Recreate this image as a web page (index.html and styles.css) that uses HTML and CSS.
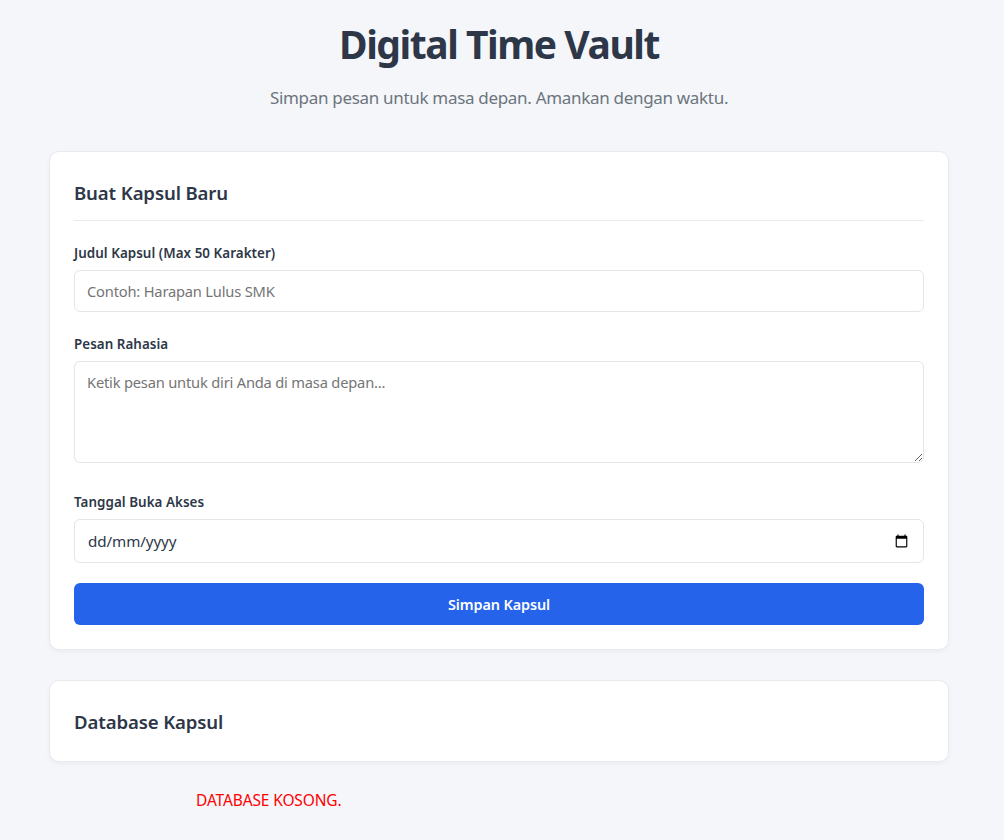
FILE: index.html
```html
<!DOCTYPE html>
<html lang="id">
<head>
<meta charset="utf-8">
<title>Digital Time Vault</title>
<link rel="stylesheet" href="styles.css">
</head>
<body>
<main class="container">
  <header class="header">
    <h1 class="title">Digital Time Vault</h1>
    <p class="subtitle">Simpan pesan untuk masa depan. Amankan dengan waktu.</p>
  </header>
  <section class="card card-form">
    <h2 class="card-title with-rule">Buat Kapsul Baru</h2>
    <form class="form">
      <div class="field field-title">
        <label class="label" for="judul">Judul Kapsul (Max 50 Karakter)</label>
        <input class="control control-text" id="judul" type="text" maxlength="50" placeholder="Contoh: Harapan Lulus SMK">
      </div>
      <div class="field field-message">
        <label class="label" for="pesan">Pesan Rahasia</label>
        <textarea class="control control-area" id="pesan" placeholder="Ketik pesan untuk diri Anda di masa depan..."></textarea>
      </div>
      <div class="field field-date">
        <label class="label" for="tanggal">Tanggal Buka Akses</label>
        <div class="date-wrap">
          <input class="control control-date" id="tanggal" type="date">
          <span class="date-mask">dd/mm/yyyy</span>
        </div>
      </div>
      <button class="submit" type="button">Simpan Kapsul</button>
    </form>
  </section>
  <section class="card card-db">
    <h2 class="card-title">Database Kapsul</h2>
  </section>
  <p class="empty">DATABASE KOSONG.</p>
</main>
</body>
</html>
```

FILE: styles.css
```css
* { box-sizing: border-box; }
html, body { margin: 0; padding: 0; }
body {
  background: #f4f6fa;
  color: #2d3748;
  font-family: "Noto Sans", "Open Sans", sans-serif;
  height: 840px;
  overflow: hidden;
}
.container { width: 900px; margin-left: 49px; padding-top: 19px; }
.header { text-align: center; margin-bottom: 41px; }
.title {
  margin: 0;
  font-size: 39px;
  line-height: 50px;
  font-weight: 700;
  color: #2d3748;
  letter-spacing: -1.45px;
}
.subtitle {
  margin: 17px 0 0;
  font-size: 17px;
  line-height: 24px;
  color: #6c757d;
  letter-spacing: -0.31px;
}
.card {
  background: #fff;
  border: 1px solid #e8eaee;
  border-radius: 10px;
  padding: 24px;
  box-shadow: 0 2px 4px rgba(0,0,0,.04);
}
.card-form { height: 499px; margin-bottom: 30px; }
.card-db { height: 82px; padding-top: 25px; }
.card-title {
  margin: 0;
  font-size: 18.6px;
  line-height: 32px;
  font-weight: 600;
  color: #2d3748;
  letter-spacing: -0.13px;
}
.with-rule { padding-top: 1px; padding-bottom: 10px; border-bottom: 1px solid #e8eaee; height: 45px; }
.form { display: flex; flex-direction: column; }
.field { display: flex; flex-direction: column; }
.field-title { margin-top: 23px; }
.field-message { margin-top: 23px; }
.field-date { margin-top: 30px; }
.label {
  font-size: 13.4px;
  line-height: 18px;
  font-weight: 600;
  color: #2d3748;
  margin-bottom: 8px;
  letter-spacing: 0.05px;
}
.control {
  display: block;
  width: 100%;
  border: 1px solid #e2e5ea;
  border-radius: 6px;
  background: #fff;
  font-family: inherit;
  font-size: 14.7px;
  color: #2d3748;
  padding: 0 12px;
  outline: none;
  letter-spacing: -0.2px;
}
.control::placeholder { color: #757575; opacity: 1; }
.control-text { height: 42px; }
.control-area { height: 102px; padding-top: 10px; resize: vertical; }
.control-date { height: 44px; }
.control-date::-webkit-datetime-edit { visibility: hidden; }
.date-wrap { position: relative; }
.date-mask {
  position: absolute;
  left: 14px;
  top: 0;
  line-height: 44px;
  font-size: 15.2px;
  letter-spacing: -0.1px;
  color: #2d3748;
  pointer-events: none;
}
.submit {
  margin-top: 20px;
  height: 42px;
  border: 0;
  border-radius: 6px;
  background: #2563eb;
  color: #fff;
  font-family: inherit;
  font-size: 14.4px;
  font-weight: 600;
  letter-spacing: -0.1px;
}
.empty {
  margin: 28px 0 0 147px;
  font-size: 15.5px;
  line-height: 20px;
  color: #ff0000;
  letter-spacing: -0.13px;
}
```
